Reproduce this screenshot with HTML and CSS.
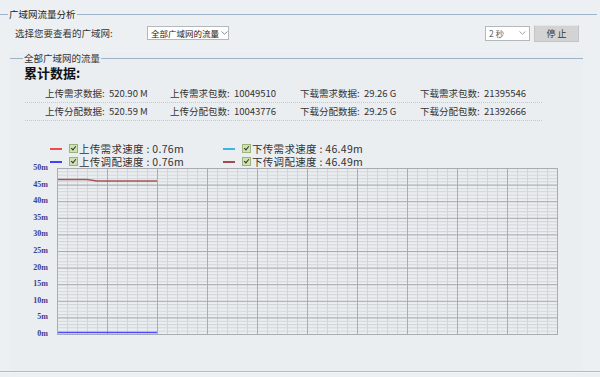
FILE: index.html
```html
<!DOCTYPE html>
<html lang="zh-CN">

<head>
    <meta charset="UTF-8">
    <title>广域网流量分析</title>
    <link rel="stylesheet" href="styles.css">
</head>

<body>
    <div class="page">
        <div class="groupHead">
            <span class="groupLine short"></span>
            <span class="groupTitle">广域网流量分析</span>
            <span class="groupLine"></span>
        </div>
        <div class="picker">
            <span class="pickLabel">选择您要查看的广域网:</span>
            <div class="selBox wanSel">全部广域网的流量<svg class="arrow" width="7" height="4" viewBox="0 0 7 4"><path d="M0.5 0.5L3.5 3.2L6.5 0.5" fill="none" stroke="#7a7a7a" stroke-width="0.9"/></svg></div>
            <div class="rightTools">
                <div class="selBox secSel">2 秒<svg class="arrow" width="7" height="4" viewBox="0 0 7 4"><path d="M0.5 0.5L3.5 3.2L6.5 0.5" fill="none" stroke="#9a9a9a" stroke-width="0.9"/></svg></div>
                <div class="stopBtn">停 止</div>
            </div>
        </div>

        <div class="inner">
            <div class="groupHead innerHead">
                <span class="groupLine short"></span>
                <span class="groupTitle">全部广域网的流量</span>
                <span class="groupLine"></span>
            </div>
            <div class="sumTitle">累计数据:</div>
            <div class="stats">
                <div class="statRow">
                    <span class="c1">上传需求数据:&nbsp;&nbsp;520.90 M</span>
                    <span class="c2">上传需求包数:&nbsp;&nbsp;10049510</span>
                    <span class="c3">下载需求数据:&nbsp;&nbsp;29.26 G</span>
                    <span class="c4">下载需求包数:&nbsp;&nbsp;21395546</span>
                </div>
                <div class="statRow">
                    <span class="c1">上传分配数据:&nbsp;&nbsp;520.59 M</span>
                    <span class="c2">上传分配包数:&nbsp;&nbsp;10043776</span>
                    <span class="c3">下载分配数据:&nbsp;&nbsp;29.25 G</span>
                    <span class="c4">下载分配包数:&nbsp;&nbsp;21392666</span>
                </div>
            </div>

            <div class="legend">
                <div class="legItem"><i class="dash red"></i><span class="chk"></span>上传需求速度 : 0.76m</div>
                <div class="legItem"><i class="dash cyan"></i><span class="chk"></span>下传需求速度 : 46.49m</div>
                <div class="legItem"><i class="dash blue"></i><span class="chk"></span>上传调配速度 : 0.76m</div>
                <div class="legItem"><i class="dash brown"></i><span class="chk"></span>下传调配速度 : 46.49m</div>
            </div>

            <div class="chart">
                <div class="yAxis">
                    <span>50m</span><span>45m</span><span>40m</span><span>35m</span><span>30m</span><span>25m</span>
                    <span>20m</span><span>15m</span><span>10m</span><span>5m</span><span>0m</span>
                </div>
                <svg class="plot" width="501" height="167" viewBox="0 0 501 167">
                    <defs>
                        <pattern id="minor" width="10" height="3.32" patternUnits="userSpaceOnUse">
                            <path d="M0.5 0V3.32M0 0.5H10" stroke="#d0d5da" stroke-width="1" fill="none" />
                        </pattern>
                        <pattern id="major" width="50" height="16.6" patternUnits="userSpaceOnUse">
                            <path d="M0.5 0V16.6M0 0.5H50" stroke="#a9acb0" stroke-width="1" fill="none" />
                        </pattern>
                    </defs>
                    <rect x="0" y="0" width="500" height="166" fill="#eceef1" />
                    <rect x="0" y="0" width="500" height="166" fill="url(#minor)" />
                    <rect x="0" y="0" width="500" height="166" fill="url(#major)" />
                    <rect x="0.5" y="0.5" width="500" height="166" fill="none" stroke="#a9acb0" />
                    <polyline points="1,11.5 30,11.5 40,13 100,13" fill="none" stroke="#a45454" stroke-width="1.3" />
                    <line x1="1" y1="164.5" x2="100" y2="164.5" stroke="#4b4bff" stroke-width="1.6" />
                </svg>
            </div>
        </div>
        <div class="bottomLine"></div>
    </div>
</body>

</html>
```

FILE: styles.css
```css
* {
    padding: 0;
    margin: 0;
    box-sizing: border-box;
}

body {
    background-color: #edf0f3;
    font-family: "Noto Sans CJK SC", "Noto Sans", sans-serif;
    color: #333;
    font-size: 10px;
    width: 600px;
    height: 377px;
    overflow: hidden;
}

.page {
    padding-top: 8px;
    border-top: 4px solid #f3f5f7;
    margin-top: -4px;
}

.groupHead {
    display: flex;
    align-items: center;
    height: 12px;
    width: 597px;
}

.groupLine {
    flex: 1;
    height: 1px;
    background-color: #9fb4c9;
}

.groupLine.short {
    flex: none;
    width: 8px;
}

.groupTitle {
    font-size: 9.5px;
    line-height: 12px;
    color: #222;
    padding: 0 1px;
    white-space: nowrap;
}

.picker {
    display: flex;
    align-items: center;
    height: 16px;
    margin-top: 5px;
    padding-left: 15px;
}

.pickLabel {
    width: 132px;
    font-size: 9.5px;
    white-space: nowrap;
}

.selBox {
    height: 14px;
    background-color: #fff;
    border: 1px solid #b4b8bd;
    font-size: 8.5px;
    line-height: 12px;
    padding: 0 3px;
    color: #222;
    display: flex;
    align-items: center;
    justify-content: space-between;
    white-space: nowrap;
    overflow: hidden;
}

.arrow {
    display: block;
    flex: none;
    margin-left: 2px;
}

.wanSel {
    width: 82px;
}

.rightTools {
    margin-left: auto;
    margin-right: 21px;
    display: flex;
    align-items: center;
    gap: 4px;
}

.secSel {
    width: 45px;
    height: 15px;
    color: #666;
}

.stopBtn {
    width: 45px;
    height: 17px;
    background-color: #d3d3d3;
    border: 1px solid #c4c4c4;
    border-top-color: #e6e6e6;
    text-align: center;
    font-size: 9px;
    line-height: 15px;
    color: #333;
}

.inner {
    margin-top: 11px;
    margin-left: 10px;
    width: 573px;
    height: 319px;
    background-color: #ebeef1;
}

.innerHead {
    width: 573px;
}

.innerHead .groupLine.short {
    width: 13px;
}

.innerHead .groupTitle {
    color: #333;
}

.sumTitle {
    font-size: 13px;
    font-weight: bold;
    line-height: 14px;
    margin-top: 2px;
    padding-left: 14px;
    color: #111;
}

.stats {
    margin-top: 5px;
    margin-left: 15px;
    width: 517px;
}

.statRow {
    display: flex;
    height: 18px;
    line-height: 17px;
    border-bottom: 1px dotted #b9cde0;
    padding-left: 20px;
    font-size: 9.5px;
    white-space: nowrap;
}

.c1 {
    width: 125px;
}

.c2 {
    width: 130px;
}

.c3 {
    width: 120px;
}

.legend {
    margin-top: 21px;
    padding-left: 40px;
    display: grid;
    grid-template-columns: 173px 160px;
}

.legItem {
    display: flex;
    align-items: center;
    height: 13px;
    line-height: 13px;
    font-size: 10.5px;
    letter-spacing: 0.3px;
    color: #333;
    white-space: nowrap;
}

.dash {
    width: 12px;
    height: 2px;
    margin-right: 7px;
}

.dash.red {
    background-color: #e85050;
}

.dash.blue {
    background-color: #4040ff;
}

.dash.cyan {
    background-color: #3cb4e6;
}

.dash.brown {
    background-color: #a84a4a;
}

.chk {
    width: 9px;
    height: 9px;
    margin-right: 1px;
    background-color: #cfe3b0;
    border: 1px solid #9bb37a;
    position: relative;
}

.chk::after {
    content: "";
    position: absolute;
    left: 2px;
    top: 0px;
    width: 2px;
    height: 4px;
    border-right: 1.5px solid #333;
    border-bottom: 1.5px solid #333;
    transform: rotate(40deg);
}

.chart {
    display: flex;
}

.yAxis {
    width: 38px;
    height: 176px;
    margin-top: -5px;
    display: flex;
    flex-direction: column;
    justify-content: space-between;
    align-items: flex-end;
    font-family: "Liberation Serif", serif;
    font-size: 8px;
    font-weight: bold;
    color: #3c3c8e;
    line-height: 10px;
}

.plot {
    margin-left: 9px;
    display: block;
}

.bottomLine {
    height: 2px;
    border-top: 1px solid #a9bed3;
    background-color: #f3f5f7;
}
```
